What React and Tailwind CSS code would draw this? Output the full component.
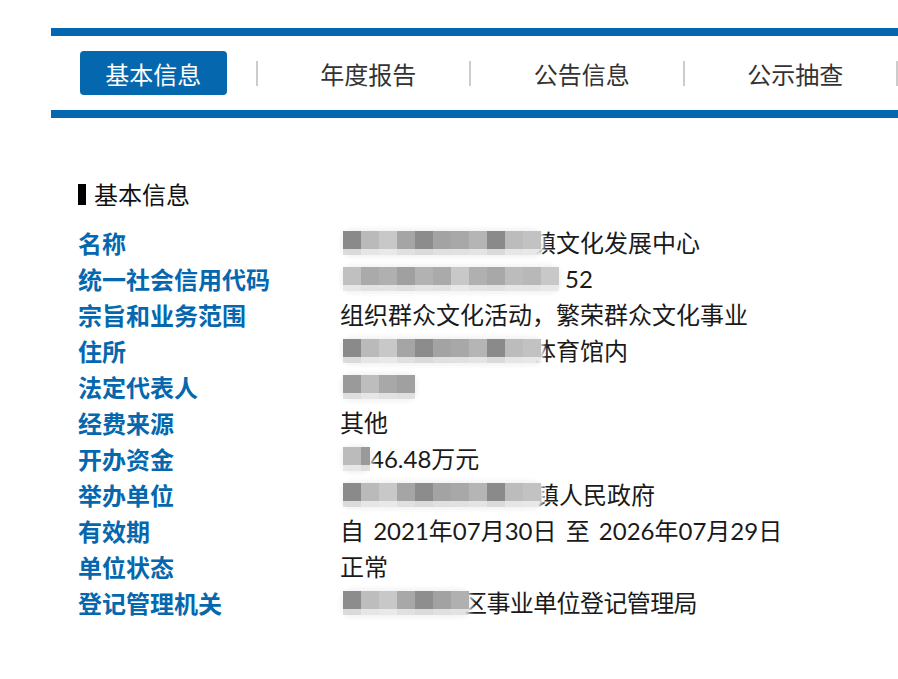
import React from 'react';

const tabs = ['年度报告', '公告信息', '公示抽查'];

// redaction mosaic, one grey per cell
const Mosaic = ({ cells, overlap = 0, last }) => (
  <span
    className="relative z-10 inline-flex shrink-0 rounded-[10px] bg-[#f4f4f4] shadow-[0_0_4px_3px_#f4f4f4]"
    style={{ marginRight: -overlap }}
  >
    {cells.map((c, i) => (
      <span key={i} className="flex flex-col" style={{ width: i === cells.length - 1 && last ? last : 18 }}>
        <span className="h-[18px]" style={{ background: c }} />
        <span className="h-[6px] opacity-25" style={{ background: c }} />
      </span>
    ))}
  </span>
);

const rowA = ['#8a8a8a', '#bababa', '#c8c8c8', '#a5a5a5', '#8c8c8c', '#a3a3a3', '#a8a8a8', '#b5b5b5', '#8a8a8a', '#bcbcbc', '#c2c2c2'];
const rowB = ['#c0c0c0', '#aaaaaa', '#b0b0b0', '#a0a0a0', '#b2b2b2', '#aaaaaa', '#c8c8c8', '#b0b0b0', '#a8a8a8', '#bcbcbc', '#b8b8b8', '#c8c8c8'];

const rows = [
  { label: '名称', value: <><Mosaic cells={rowA} overlap={9} /><span>镇文化发展中心</span></> },
  { label: '统一社会信用代码', value: <><Mosaic cells={rowB} /><span className="ml-[6px]">52</span></> },
  { label: '宗旨和业务范围', value: '组织群众文化活动，繁荣群众文化事业' },
  { label: '住所', value: <><Mosaic cells={rowA} overlap={9} /><span>体育馆内</span></> },
  { label: '法定代表人', value: <Mosaic cells={['#9a9a9a', '#bdbdbd', '#a8a8a8', '#a0a0a0']} /> },
  { label: '经费来源', value: '其他' },
  { label: '开办资金', value: <><Mosaic cells={['#bbbbbb', '#9a9a9a']} last={9} /><span>46.48万元</span></> },
  { label: '举办单位', value: <><Mosaic cells={rowA} overlap={6} /><span>镇人民政府</span></> },
  { label: '有效期', value: '自 2021年07月30日 至 2026年07月29日' },
  { label: '单位状态', value: '正常' },
  { label: '登记管理机关', value: <><Mosaic cells={['#8c8c8c', '#bdbdbd', '#c8c8c8', '#a8a8a8', '#8e8e8e', '#a2a2a2', '#b0b0b0']} overlap={6} /><span className="tracking-[-0.6px]">区事业单位登记管理局</span></> },
];

export default function App() {
  return (
    <div
      className="w-[898px] min-h-[679px] overflow-hidden bg-white"
      style={{ fontFamily: '"Noto Sans CJK SC", "Noto Sans", sans-serif' }}
    >
      <div className="ml-[51px] pt-[28px]">
        <div className="h-[8px] bg-[#0568ae]" />
        <div className="flex h-[74px] items-center">
          <div className="flex w-[205px] justify-center">
            <div className="flex h-[44px] w-[147px] items-center justify-center rounded-[4px] bg-[#0568ae] pt-[2px] text-[24px] text-white">
              基本信息
            </div>
          </div>
          {tabs.map((t) => (
            <React.Fragment key={t}>
              <div className="h-[25px] w-[2px] bg-[#cccccc]" />
              <div className="w-[212px] pl-[10px] pt-[2px] text-center text-[24px] text-[#333]">{t}</div>
            </React.Fragment>
          ))}
          <div className="h-[25px] w-[2px] bg-[#cccccc]" />
        </div>
        <div className="h-[8px] bg-[#0568ae]" />
      </div>

      <div className="ml-[78px] mt-[58px]">
        <div className="flex h-[36px] items-center gap-[8px]">
          <span className="h-[21px] w-[8px] bg-black" />
          <span className="text-[24px] text-[#111]">基本信息</span>
        </div>
        <div className="mt-[13px]">
          {rows.map((r) => (
            <div key={r.label} className="flex h-[36px] items-center text-[24px]">
              <div className="w-[262px] font-bold text-[#0568ae]">{r.label}</div>
              <div
                className="flex items-center whitespace-pre text-[#1a1a1a] [word-spacing:3px]"
                style={{ fontFamily: 'Lato, "Noto Sans CJK SC", sans-serif' }}
              >
                {typeof r.value === 'string' ? r.value : <span className="ml-[3px] flex items-center">{r.value}</span>}
              </div>
            </div>
          ))}
        </div>
      </div>
    </div>
  );
}
